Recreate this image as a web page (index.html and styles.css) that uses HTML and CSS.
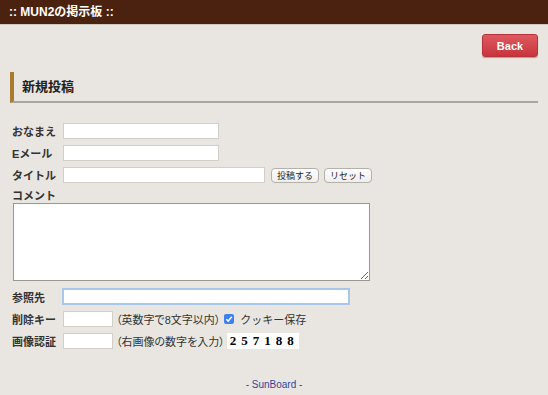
FILE: index.html
```html
<!DOCTYPE html>
<html lang="ja">
<head>
    <meta charset="UTF-8">
    <title>MUN2の掲示板</title>
    <link rel="stylesheet" href="styles.css">
</head>
<body>

    <div class="header">:: MUN2の掲示板 ::</div>

    <div class="container">
        <div class="back-wrap">
            <a class="back" href="#">Back</a>
        </div>

        <h2 class="title">新規投稿</h2>

        <form class="form">
            <div class="row">
                <label class="label">おなまえ</label>
                <input type="text" class="input w-mid">
            </div>
            <div class="row">
                <label class="label">Eメール</label>
                <input type="text" class="input w-mid">
            </div>
            <div class="row">
                <label class="label">タイトル</label>
                <input type="text" class="input w-long">
                <button type="button" class="small-btn">投稿する</button>
                <button type="button" class="small-btn">リセット</button>
            </div>
            <div class="row row-comment">
                <label class="label">コメント</label>
            </div>
            <textarea class="comment"></textarea>
            <div class="row row-url">
                <label class="label">参照先</label>
                <input type="text" class="input w-url focus">
            </div>
            <div class="row">
                <label class="label">削除キー</label>
                <input type="text" class="input w-short">
                <span class="note">（英数字で8文字以内）</span>
                <span class="check">
                    <svg width="10" height="10" viewBox="0 0 10 10">
                        <rect width="10" height="10" rx="2" fill="#3b82f0"/>
                        <path d="M2.3 5.2 L4.2 7.1 L7.8 2.8" fill="none" stroke="#fff" stroke-width="1.5"/>
                    </svg>
                    クッキー保存
                </span>
            </div>
            <div class="row">
                <label class="label">画像認証</label>
                <input type="text" class="input w-short">
                <span class="note">（右画像の数字を入力）</span>
                <span class="captcha">257188</span>
            </div>
        </form>

        <div class="footer">- <a href="#">SunBoard</a> -</div>
    </div>

</body>
</html>
```

FILE: styles.css
```css
body {
    margin: 0;
    background-color: #e9e6e1;
    font-family: "Liberation Sans", "Noto Sans CJK JP", sans-serif;
    color: #333;
}

.header {
    height: 24px;
    line-height: 24px;
    background-color: #4b2210;
    border-bottom: 1px solid #cfc8bf;
    color: #fff;
    font-weight: bold;
    font-size: 12px;
    padding-left: 9px;
}

.container {
    padding: 0 10px;
}

.back-wrap {
    display: flex;
    justify-content: flex-end;
    padding-top: 9px;
}

.back {
    display: block;
    width: 56px;
    height: 23px;
    line-height: 23px;
    text-align: center;
    color: #fff;
    font-weight: bold;
    font-size: 11px;
    text-decoration: none;
    border-radius: 3px;
    background: linear-gradient(#de5a60, #c8343d);
    border: 1px solid #b8323a;
    box-sizing: border-box;
    box-shadow: 0 1px 1px rgba(0, 0, 0, 0.3);
}

.title {
    margin: 15px 0 0 0;
    height: 29px;
    line-height: 30px;
    font-size: 13px;
    font-weight: bold;
    color: #222;
    padding-left: 8px;
    border-left: 4px solid #a97b2c;
    border-bottom: 2px solid #aaa59e;
}

.form {
    padding: 17px 0 0 2px;
}

.row {
    display: flex;
    align-items: center;
    height: 22px;
}

.label {
    width: 51px;
    flex-shrink: 0;
    font-size: 11px;
    font-weight: bold;
    color: #333;
}

.input {
    height: 16px;
    box-sizing: border-box;
    border: 1px solid #d2cec8;
    background: #fff;
    padding: 0 2px;
    margin: 0;
    outline: none;
}

.w-mid { width: 156px; }
.w-long { width: 202px; }
.w-short { width: 50px; }
.w-url { width: 288px; height: 17px; }

.focus {
    border: 2px solid #a9c7ea;
    margin-left: -1px;
}

.small-btn {
    height: 15px;
    margin: 0 0 0 6px;
    padding: 0 5px;
    font-size: 9px;
    font-family: "Noto Sans CJK JP", sans-serif;
    border: 1px solid #b4b0aa;
    border-radius: 4px;
    background: linear-gradient(#ffffff, #eeeeee);
    color: #222;
    line-height: 13px;
}

.small-btn + .small-btn {
    margin-left: 5px;
}

.row-comment {
    height: 17px;
}

.comment {
    display: block;
    width: 357px;
    height: 78px;
    box-sizing: border-box;
    margin: 0 0 4px 1px;
    border: 1px solid #9a9690;
    background: #fff;
}

.row-url {
    height: 23px;
}

.note {
    margin-left: 3px;
    font-size: 11px;
    font-feature-settings: "palt";
    color: #333;
}

.check {
    display: flex;
    align-items: center;
    gap: 6px;
    margin-left: 4px;
    font-size: 11px;
}

.captcha {
    margin-left: 2px;
    width: 72px;
    height: 16px;
    line-height: 16px;
    background: #fff;
    font-family: "Liberation Serif", serif;
    font-weight: bold;
    font-size: 13px;
    letter-spacing: 5px;
    padding-left: 3px;
    box-sizing: border-box;
    color: #000;
    white-space: nowrap;
    overflow: hidden;
}

.footer {
    text-align: center;
    font-size: 10px;
    color: #334499;
    margin-top: 27px;
}

.footer a {
    color: #334499;
    text-decoration: none;
}
```
